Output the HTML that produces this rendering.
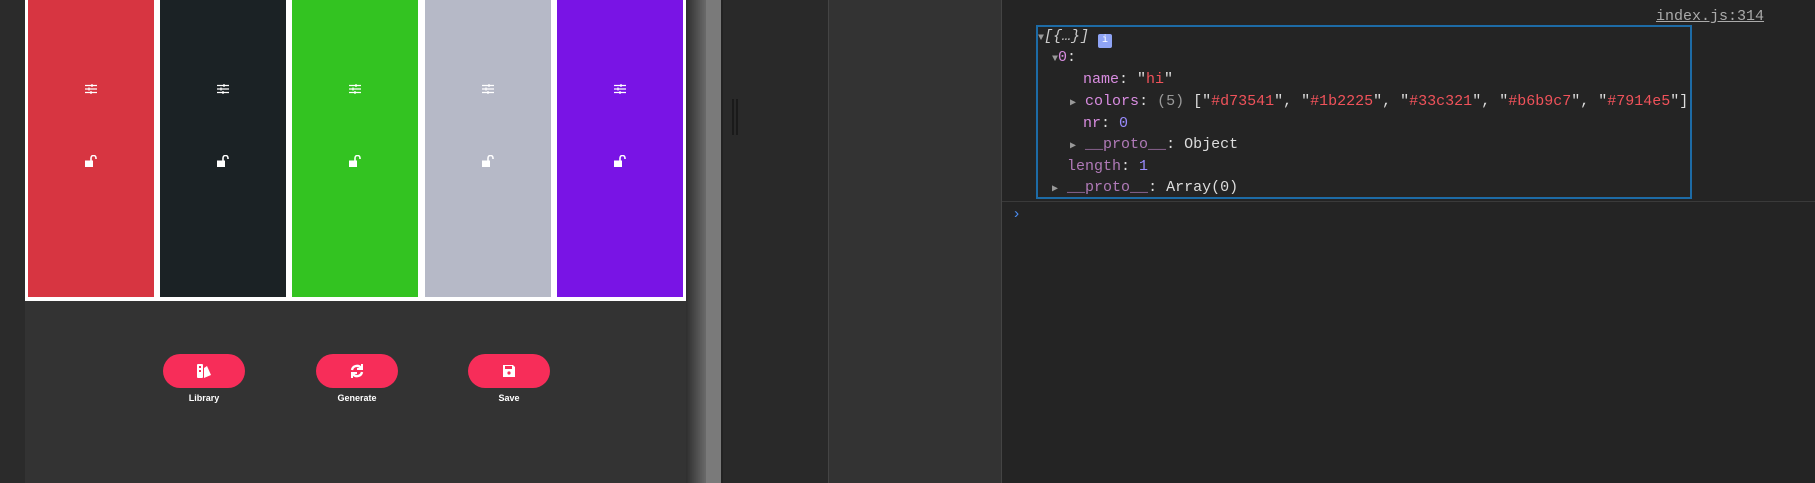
<!DOCTYPE html>
<html><head><meta charset="utf-8"><style>
*{margin:0;padding:0;box-sizing:border-box}
body{width:1815px;height:483px;overflow:hidden;background:#2b2b2b;position:relative;font-family:"Liberation Sans",sans-serif}
.abs{position:absolute}
.app{left:25px;top:0;width:661px;height:483px;background:#333}
.white{left:25px;top:0;width:661px;height:301px;background:#fff}
.col{top:0;height:297px}
.icon{position:absolute;left:50%;transform:translateX(-50%)}
.btn{top:354px;width:82px;height:34px;border-radius:17px;background:#f72d59}
.lbl{top:393px;width:82px;text-align:center;color:#fff;font-size:9px;font-weight:bold}
.mono{font-family:"Liberation Mono",monospace;font-size:15px;white-space:pre;color:#ddd}
.ln{position:absolute;height:21px;line-height:21px}
.p{color:#d88ce0}.s{color:#f0525a}.n{color:#9a8cff}.g{color:#999}
.tri{color:#999;font-size:10px}
</style></head><body>
<div class="abs app"></div>
<div class="abs" style="left:686px;top:0;width:20px;height:483px;background:linear-gradient(90deg,#2e2e2e,#6a6a6a)"></div>
<div class="abs" style="left:706px;top:0;width:15px;height:483px;background:#7a7a7a"></div>
<div class="abs" style="left:721px;top:0;width:2px;height:483px;background:#222"></div>
<div class="abs" style="left:723px;top:0;width:105px;height:483px;background:#292929"></div>
<div class="abs" style="left:732px;top:99px;width:2px;height:36px;background:#1a1a1a"></div>
<div class="abs" style="left:736px;top:99px;width:2px;height:36px;background:#1a1a1a"></div>
<div class="abs" style="left:828px;top:0;width:1px;height:483px;background:#444"></div>
<div class="abs" style="left:829px;top:0;width:172px;height:483px;background:#333"></div>
<div class="abs" style="left:1001px;top:0;width:1px;height:483px;background:#444"></div>
<div class="abs" style="left:1002px;top:0;width:813px;height:483px;background:#242424"></div>
<div class="abs white"></div>
<div id="cols"></div>
<div class="abs btn" style="left:163px"><svg class="icon" style="top:9px" width="16" height="16" viewBox="0 0 16 16"><rect x="1" y="1" width="6" height="14" rx="1" fill="#fff"/><rect x="3" y="3" width="2" height="2" fill="#f72d59"/><rect x="3" y="7" width="2" height="2" fill="#f72d59"/><path d="M8 5 L11 3 L15 12 L8 15Z" fill="#fff"/></svg></div>
<div class="abs btn" style="left:316px"><svg class="icon" style="top:9px" width="16" height="16" viewBox="0 0 16 16" fill="none" stroke="#fff" stroke-width="2.4"><path d="M3 7 A5 5 0 0 1 12 5"/><path d="M13 9 A5 5 0 0 1 4 11"/><path d="M13 1 V6 H8" stroke-width="2"/><path d="M3 15 V10 H8" stroke-width="2"/></svg></div>
<div class="abs btn" style="left:468px"><svg class="icon" style="top:9px" width="16" height="16" viewBox="0 0 16 16"><path d="M2 2 H12 L14 4 V14 H2Z" fill="#fff"/><rect x="4" y="3" width="7" height="3" fill="#f72d59"/><circle cx="8" cy="10" r="1.6" fill="#f72d59"/></svg></div>
<div class="abs lbl" style="left:163px">Library</div>
<div class="abs lbl" style="left:316px">Generate</div>
<div class="abs lbl" style="left:468px">Save</div>

<div class="abs mono" style="left:1656px;top:8px;font-size:15px;color:#aaa;text-decoration:underline">index.js:314</div>
<div class="abs" style="left:1036px;top:25px;width:656px;height:174px;border:2px solid #1d6ba6"></div>
<div class="abs mono" style="left:0;top:0">
<div class="ln" style="left:1038px;top:26px"><span class="tri">▼</span><i style="color:#ccc">[{…}]</i> <span style="display:inline-block;width:14px;height:14px;background:#8fa4f5;border-radius:2px;vertical-align:-2px;color:#fff;font-size:10px;text-align:center;line-height:14px">i</span></div>
<div class="ln" style="left:1052px;top:47px"><span class="tri">▼</span><span class="p">0</span>:</div>
<div class="ln" style="left:1083px;top:69px"><span class="p">name</span>: "<span class="s">hi</span>"</div>
<div class="ln" style="left:1070px;top:91px"><span class="tri">▶</span> <span class="p">colors</span>: <span class="g">(5)</span> ["<span class="s">#d73541</span>", "<span class="s">#1b2225</span>", "<span class="s">#33c321</span>", "<span class="s">#b6b9c7</span>", "<span class="s">#7914e5</span>"]</div>
<div class="ln" style="left:1083px;top:113px"><span class="p">nr</span>: <span class="n">0</span></div>
<div class="ln" style="left:1070px;top:134px"><span class="tri">▶</span> <span style="color:#b07ab8">__proto__</span>: Object</div>
<div class="ln" style="left:1067px;top:156px"><span style="color:#b07ab8">length</span>: <span class="n">1</span></div>
<div class="ln" style="left:1052px;top:177px"><span class="tri">▶</span> <span style="color:#b07ab8">__proto__</span>: Array(0)</div>
</div>
<div class="abs" style="left:1002px;top:201px;width:813px;height:1px;background:#3a3a3a"></div>
<div class="abs mono" style="left:1012px;top:206px;color:#4a8cf0">›</div>

<script>
var c=[["#d73541",28],["#1b2225",160],["#33c321",292],["#b6b9c7",425],["#7914e5",557]],h="";
c.forEach(function(a){h+='<div class="abs col" style="left:'+a[1]+'px;width:126px;background:'+a[0]+'">'+
'<svg class="icon" style="top:83px" width="12" height="12" viewBox="0 0 12 12" stroke="#fff" stroke-width="1.2"><path d="M0 2.5H12M0 6H12M0 9.5H12"/><path d="M7 1V4M4 4.5V7.5M6 8V11"/></svg>'+
'<svg class="icon" style="top:155px" width="12" height="12" viewBox="0 0 12 12"><rect x="0" y="5.5" width="8" height="6.5" fill="#fff"/><path d="M6 6V3A2.5 2.5 0 0 1 11 3V4" fill="none" stroke="#fff" stroke-width="1.6"/></svg></div>';});
document.getElementById("cols").innerHTML=h;
</script>
</body></html>
